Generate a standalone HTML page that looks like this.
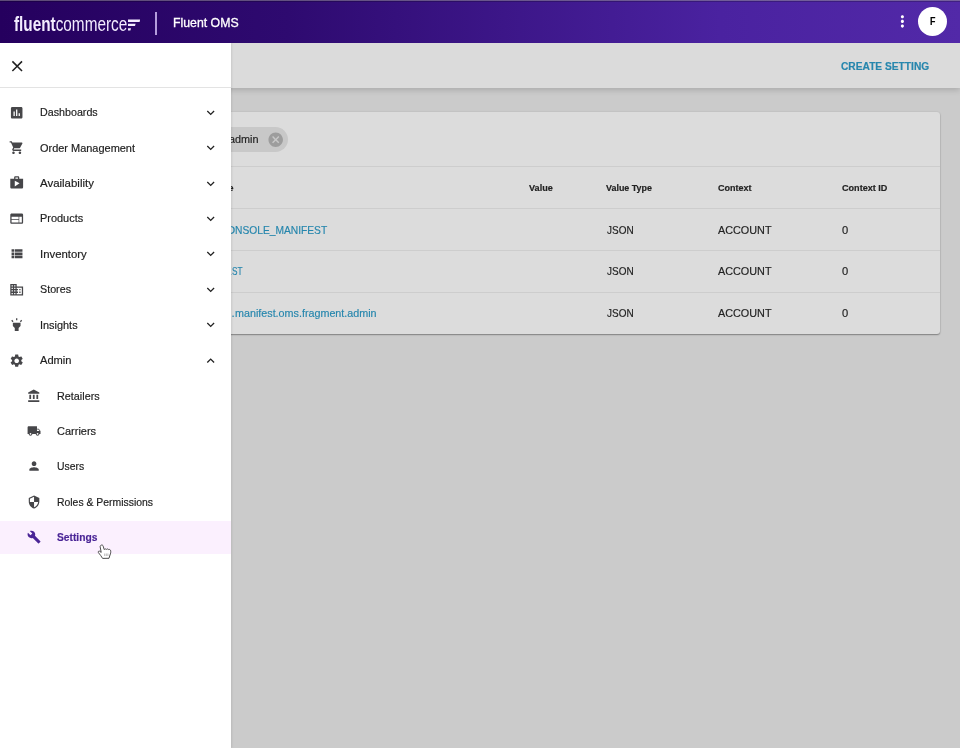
<!DOCTYPE html>
<html><head><meta charset="utf-8">
<style>
*{box-sizing:border-box;margin:0;padding:0}
html,body{width:960px;height:748px;overflow:hidden;background:#cbcbcb;font-family:"Liberation Sans",sans-serif;color:#212121}
svg{display:block}
.t{position:absolute;white-space:nowrap;font-size:11.5px;line-height:16px;color:#222;-webkit-text-stroke:.18px currentColor}
.fit{display:inline-block;white-space:nowrap;transform-origin:0 50%}
.b{font-weight:700}
.lk{color:#2686ad}
#hdr{position:absolute;left:0;top:0;width:960px;height:43px;background:linear-gradient(90deg,#25005e 0%,#2e0a70 30%,#4a22a0 75%,#5229a8 100%)}
#hdr .l1{position:absolute;left:0;top:0;width:960px;height:1px;background:rgba(151,152,145,.5)}
#hdr .l2{position:absolute;left:0;top:1px;width:960px;height:1px;background:rgba(0,0,0,.22)}
#hdr .t{color:#fff}
#logo{position:absolute;left:14px;top:11.5px;color:#f3ecff;white-space:nowrap;font-size:21px;line-height:24px}
#vdiv{position:absolute;left:155.3px;top:11.8px;width:1.5px;height:23.2px;background:rgba(215,195,250,.8)}
#avatar{position:absolute;left:918px;top:7.4px;width:29px;height:29px;border-radius:50%;background:#fff}
#tb{position:absolute;left:0;top:43px;width:960px;height:45px;background:#dbdbdb;box-shadow:0 2px 6px rgba(0,0,0,.17)}
#card{position:absolute;left:20px;top:112px;width:920px;height:222.3px;background:#dcdcdc;border-radius:3px;box-shadow:0 1px 1.5px rgba(0,0,0,.36),0 0 2px rgba(0,0,0,.12)}
.hr{position:absolute;left:20px;width:920px;height:1px;background:#cdcdcd}
#chip{position:absolute;left:150px;top:126.7px;width:138px;height:25px;border-radius:12.5px;background:#c8c8c8}
#side{position:absolute;left:0;top:43px;width:231px;height:705px;background:#fff;box-shadow:1px 0 2px rgba(0,0,0,.09)}
#side .sep{position:absolute;left:0;top:44px;width:231px;height:1px;background:#e3e3e3}
.row{position:absolute;left:0;width:231px;height:0}
.row .ic{position:absolute;left:8.65px;top:-7.7px;width:15.4px;height:15.4px;fill:#464649}
.row .lb{position:absolute;left:40.4px;top:-8.1px;font-size:11.5px;line-height:16px;color:#212121;white-space:nowrap;-webkit-text-stroke:.18px currentColor}
.row .ch{position:absolute;left:203.1px;top:-7.6px;width:15.4px;height:15.4px;fill:#212121}
.row.sub .ic{left:26.85px;top:-7.05px;width:14.1px;height:14.1px}
.row.sub .lb{left:57.4px}
.row .selbg{position:absolute;left:0;top:-16.25px;width:231px;height:32.5px;background:#fbf0fe}
.row.sel .lb{color:#4a2596;font-weight:700;left:57.4px}
.row.sel .ic{fill:#4a2596}
#root{position:absolute;left:0;top:0;width:960px;height:748px;overflow:hidden;will-change:transform}
</style></head><body><div id="root">
<div id="tb"></div>
<div id="card"></div>
<div id="chip"></div>
<svg viewBox="0 0 24 24" style="position:absolute;left:266.55px;top:130.5px;width:17.4px;height:17.4px;fill:#9d9d9d"><path d="M12 2C6.47 2 2 6.47 2 12s4.47 10 10 10 10-4.47 10-10S17.53 2 12 2zm5 13.59L15.59 17 12 13.41 8.41 17 7 15.59 10.59 12 7 8.41 8.41 7 12 10.59 15.59 7 17 8.41 13.41 12 17 15.590z"/></svg>
<div class="hr" style="top:166px"></div>
<div class="hr" style="top:208.2px"></div>
<div class="hr" style="top:250px"></div>
<div class="hr" style="top:292px"></div>
<span class="t b lk" style="left:841.1px;top:58.50px;font-size:10.2px;"><span class="fit" style="transform:scaleX(1.0010)">CREATE SETTING</span></span>
<span class="t " style="left:229.3px;top:131.00px;font-size:11.5px;"><span class="fit" style="transform:scaleX(0.9416)">admin</span></span>
<span class="t b" style="left:208.5px;top:179.50px;font-size:9.7px;"><span class="fit" style="transform:scaleX(0.9284)">Name</span></span>
<span class="t b" style="left:529.2px;top:179.50px;font-size:9.7px;"><span class="fit" style="transform:scaleX(0.9402)">Value</span></span>
<span class="t b" style="left:606.3px;top:179.50px;font-size:9.7px;"><span class="fit" style="transform:scaleX(0.9197)">Value Type</span></span>
<span class="t b" style="left:717.7px;top:179.50px;font-size:9.7px;"><span class="fit" style="transform:scaleX(0.9289)">Context</span></span>
<span class="t b" style="left:841.7px;top:179.50px;font-size:9.7px;"><span class="fit" style="transform:scaleX(0.9373)">Context ID</span></span>
<span class="t lk" style="right:724.7px;top:222.00px;font-size:11.5px">FC_MYSTIQUE_CO</span>
<span class="t lk" style="left:235.3px;top:222.00px;font-size:11.5px;"><span class="fit" style="transform:scaleX(0.8906)">NSOLE_MANIFEST</span></span>
<span class="t " style="left:606.7px;top:222.00px;font-size:11.5px;"><span class="fit" style="transform:scaleX(0.8672)">JSON</span></span>
<span class="t " style="left:717.7px;top:222.00px;font-size:11.5px;"><span class="fit" style="transform:scaleX(0.9407)">ACCOUNT</span></span>
<span class="t " style="left:841.7px;top:222.00px;font-size:11.5px;"><span class="fit" style="transform:scaleX(0.9678)">0</span></span>
<span class="t lk" style="right:728.3px;top:263.00px;font-size:11.5px">FC_MYSTIQUE_MANIFE</span>
<span class="t lk" style="left:231.7px;top:263.00px;font-size:11.5px;"><span class="fit" style="transform:scaleX(0.7141)">ST</span></span>
<span class="t " style="left:606.7px;top:263.00px;font-size:11.5px;"><span class="fit" style="transform:scaleX(0.8672)">JSON</span></span>
<span class="t " style="left:717.7px;top:263.00px;font-size:11.5px;"><span class="fit" style="transform:scaleX(0.9407)">ACCOUNT</span></span>
<span class="t " style="left:841.7px;top:263.00px;font-size:11.5px;"><span class="fit" style="transform:scaleX(0.9678)">0</span></span>
<span class="t lk" style="right:725.3px;top:305.00px;font-size:11.5px">fc.mystique.</span>
<span class="t lk" style="left:234.7px;top:305.00px;font-size:11.5px;"><span class="fit" style="transform:scaleX(0.9347)">manifest.oms.fragment.admin</span></span>
<span class="t " style="left:606.7px;top:305.00px;font-size:11.5px;"><span class="fit" style="transform:scaleX(0.8672)">JSON</span></span>
<span class="t " style="left:717.7px;top:305.00px;font-size:11.5px;"><span class="fit" style="transform:scaleX(0.9407)">ACCOUNT</span></span>
<span class="t " style="left:841.7px;top:305.00px;font-size:11.5px;"><span class="fit" style="transform:scaleX(0.9678)">0</span></span>
<div id="side">
 <svg viewBox="0 0 24 24" style="position:absolute;left:7.5px;top:13.7px;width:18.4px;height:18.4px;fill:#212121"><path d="M19 6.41L17.59 5 12 10.59 6.41 5 5 6.41 10.59 12 5 17.59 6.41 19 12 13.41 17.59 19 19 17.59 13.41 12z"/></svg>
 <div class="sep"></div>
<div class="row" style="top:69.30px"><svg class="ic" viewBox="0 0 24 24"><path d="M19 3H5c-1.1 0-2 .9-2 2v14c0 1.1.9 2 2 2h14c1.1 0 2-.9 2-2V5c0-1.1-.9-2-2-2zM9 17H7v-7h2v7zm4 0h-2V7h2v10zm4 0h-2v-4h2v4z"/></svg><span class="lb" style="top:-8.30px"><span class="fit" style="transform:scaleX(0.9304)">Dashboards</span></span><svg class="ch" viewBox="0 0 24 24"><path d="M16.59 8.59L12 13.17 7.41 8.59 6 10l6 6 6-6z"/></svg></div>
<div class="row" style="top:104.72px"><svg class="ic" viewBox="0 0 24 24"><path d="M7 18c-1.1 0-1.99.9-1.99 2S5.9 22 7 22s2-.9 2-2-.9-2-2-2zM1 2v2h2l3.6 7.59-1.35 2.45c-.16.28-.25.61-.25.96 0 1.1.9 2 2 2h12v-2H7.42c-.14 0-.25-.11-.25-.25l.03-.12.9-1.63h7.45c.75 0 1.41-.41 1.75-1.03l3.58-6.49c.08-.14.12-.31.12-.48 0-.55-.45-1-1-1H5.21l-.94-2H1zm16 16c-1.1 0-1.99.9-1.99 2s.89 2 1.99 2 2-.9 2-2-.9-2-2-2z"/></svg><span class="lb" style="top:-7.72px"><span class="fit" style="transform:scaleX(0.9527)">Order Management</span></span><svg class="ch" viewBox="0 0 24 24"><path d="M16.59 8.59L12 13.17 7.41 8.59 6 10l6 6 6-6z"/></svg></div>
<div class="row" style="top:140.14px"><svg class="ic" viewBox="0 0 24 24"><path d="M16 6V4c0-1.11-.89-2-2-2h-4c-1.11 0-2 .89-2 2v2H2v13c0 1.11.89 2 2 2h16c1.11 0 2-.89 2-2V6h-6zm-6-2h4v2h-4V4zM9 18V9l7.5 4L9 18z"/></svg><span class="lb" style="top:-8.14px"><span class="fit" style="transform:scaleX(0.9958)">Availability</span></span><svg class="ch" viewBox="0 0 24 24"><path d="M16.59 8.59L12 13.17 7.41 8.59 6 10l6 6 6-6z"/></svg></div>
<div class="row" style="top:175.56px"><svg class="ic" viewBox="0 0 24 24"><path d="M20 4H4c-1.1 0-1.99.9-1.99 2L2 18c0 1.1.9 2 2 2h16c1.1 0 2-.9 2-2V6c0-1.1-.9-2-2-2zm-5 14H4v-4h11v4zm0-5H4V9h11v4zm5 5h-4V9h4v9z"/></svg><span class="lb" style="top:-8.56px"><span class="fit" style="transform:scaleX(0.9517)">Products</span></span><svg class="ch" viewBox="0 0 24 24"><path d="M16.59 8.59L12 13.17 7.41 8.59 6 10l6 6 6-6z"/></svg></div>
<div class="row" style="top:210.98px"><svg class="ic" viewBox="0 0 24 24"><path d="M4 14h4v-4H4v4zm0 5h4v-4H4v4zM4 9h4V5H4v4zm5 5h12v-4H9v4zm0 5h12v-4H9v4zM9 5v4h12V5H9z"/></svg><span class="lb" style="top:-7.98px"><span class="fit" style="transform:scaleX(0.9871)">Inventory</span></span><svg class="ch" viewBox="0 0 24 24"><path d="M16.59 8.59L12 13.17 7.41 8.59 6 10l6 6 6-6z"/></svg></div>
<div class="row" style="top:246.40px"><svg class="ic" viewBox="0 0 24 24"><path d="M12 7V3H2v18h20V7H12zM6 19H4v-2h2v2zm0-4H4v-2h2v2zm0-4H4V9h2v2zm0-4H4V5h2v2zm4 12H8v-2h2v2zm0-4H8v-2h2v2zm0-4H8V9h2v2zm0-4H8V5h2v2zm10 12h-8v-2h2v-2h-2v-2h2v-2h-2V9h8v10zm-2-8h-2v2h2v-2zm0 4h-2v2h2v-2z"/></svg><span class="lb" style="top:-8.40px"><span class="fit" style="transform:scaleX(0.9323)">Stores</span></span><svg class="ch" viewBox="0 0 24 24"><path d="M16.59 8.59L12 13.17 7.41 8.59 6 10l6 6 6-6z"/></svg></div>
<div class="row" style="top:281.82px"><svg class="ic" viewBox="0 0 24 24"><path d="M6 14l3 3v5h6v-5l3-3V9H6v5zm5-12h2v3h-2V2zM3.5 5.88l1.41-1.41 2.12 2.12L5.62 8 3.5 5.88zm13.46.71l2.12-2.12 1.41 1.41L18.38 8l-1.42-1.41z"/></svg><span class="lb" style="top:-7.82px"><span class="fit" style="transform:scaleX(0.9485)">Insights</span></span><svg class="ch" viewBox="0 0 24 24"><path d="M16.59 8.59L12 13.17 7.41 8.59 6 10l6 6 6-6z"/></svg></div>
<div class="row" style="top:317.24px"><svg class="ic" viewBox="0 0 24 24"><path d="M19.14 12.94c.04-.3.06-.61.06-.94 0-.32-.02-.64-.07-.94l2.03-1.58c.18-.14.23-.41.12-.61l-1.92-3.32c-.12-.22-.37-.29-.59-.22l-2.39.96c-.5-.38-1.03-.7-1.62-.94l-.36-2.54c-.04-.24-.24-.41-.48-.41h-3.84c-.24 0-.43.17-.47.41l-.36 2.54c-.59.24-1.13.57-1.62.94l-2.39-.96c-.22-.08-.47 0-.59.22L2.74 8.87c-.12.21-.08.47.12.61l2.03 1.58c-.05.3-.09.63-.09.94s.02.64.07.94l-2.03 1.58c-.18.14-.23.41-.12.61l1.92 3.32c.12.22.37.29.59.22l2.39-.96c.5.38 1.03.7 1.62.94l.36 2.54c.05.24.24.41.48.41h3.84c.24 0 .44-.17.47-.41l.36-2.54c.59-.24 1.13-.56 1.62-.94l2.39.96c.22.08.47 0 .59-.22l1.92-3.32c.12-.22.07-.47-.12-.61l-2.01-1.58zM12 15.6c-1.98 0-3.6-1.62-3.6-3.6s1.62-3.6 3.6-3.6 3.6 1.62 3.6 3.6-1.62 3.6-3.6 3.6z"/></svg><span class="lb" style="top:-8.24px"><span class="fit" style="transform:scaleX(0.9660)">Admin</span></span><svg class="ch" viewBox="0 0 24 24"><path d="M12 8l-6 6 1.41 1.41L12 10.83l4.59 4.58L18 14z"/></svg></div>
<div class="row sub" style="top:352.66px"><svg class="ic" viewBox="0 0 24 24"><path d="M4 10v7h3v-7H4zm6 0v7h3v-7h-3zM2 22h19v-3H2v3zm14-12v7h3v-7h-3zm-4.5-9L2 6v2h19V6l-9.5-5z"/></svg><span class="lb" style="top:-7.66px"><span class="fit" style="transform:scaleX(0.9407)">Retailers</span></span></div>
<div class="row sub" style="top:388.08px"><svg class="ic" viewBox="0 0 24 24"><path d="M20 8h-3V4H3c-1.1 0-2 .9-2 2v11h2c0 1.66 1.34 3 3 3s3-1.34 3-3h6c0 1.66 1.34 3 3 3s3-1.34 3-3h2v-5l-3-4zM6 18.5c-.83 0-1.5-.67-1.5-1.5s.67-1.5 1.5-1.5 1.5.67 1.5 1.5-.67 1.5-1.5 1.5zm13.5-9l1.96 2.5H17V9.5h2.5zm-1.5 9c-.83 0-1.5-.67-1.5-1.5s.67-1.5 1.5-1.5 1.5.67 1.5 1.5-.67 1.5-1.5 1.5z"/></svg><span class="lb" style="top:-8.08px"><span class="fit" style="transform:scaleX(0.9562)">Carriers</span></span></div>
<div class="row sub" style="top:423.50px"><svg class="ic" viewBox="0 0 24 24"><path d="M12 12c2.21 0 4-1.79 4-4s-1.79-4-4-4-4 1.79-4 4 1.79 4 4 4zm0 2c-2.67 0-8 1.34-8 4v2h16v-2c0-2.66-5.33-4-8-4z"/></svg><span class="lb" style="top:-8.50px"><span class="fit" style="transform:scaleX(0.9057)">Users</span></span></div>
<div class="row sub" style="top:458.92px"><svg class="ic" viewBox="0 0 24 24"><path d="M12 1L3 5v6c0 5.55 3.84 10.74 9 12 5.16-1.26 9-6.45 9-12V5l-9-4zm0 10.99h7c-.53 4.12-3.28 7.79-7 8.94V12H5V6.3l7-3.11v8.8z"/></svg><span class="lb" style="top:-7.92px"><span class="fit" style="transform:scaleX(0.9049)">Roles &amp; Permissions</span></span></div>
<div class="row sub sel" style="top:494.34px"><div class="selbg"></div><svg class="ic" viewBox="0 0 24 24"><path d="M22.7 19l-9.1-9.1c.9-2.3.4-5-1.5-6.9-2-2-5-2.4-7.4-1.3L9 6 6 9 1.6 4.700C.4 7.1.9 10.100 2.9 12.100c1.9 1.900 4.600 2.400 6.900 1.500l9.100 9.100c.4.4 1 .4 1.4 0l2.300-2.300c.5-.4.5-1.100.1-1.400z"/></svg><span class="lb" style="top:-8.34px"><span class="fit" style="transform:scaleX(0.8904)">Settings</span></span></div>
</div>
<div id="hdr"><div class="l1"></div><div class="l2"></div>
 <div id="vdiv"></div>
 <svg viewBox="0 0 140 43" style="position:absolute;left:0;top:0;width:140px;height:43px;fill:#f3ecff"><path d="M128 19.6h12.200l-.6 2.300h-11.600zM128 23.800h7.600l-.6 2.300h-7zM128 28.300h3l-.6 2.300h-2.400z"/></svg>
 <svg viewBox="0 0 24 24" style="position:absolute;left:893px;top:12.150px;width:18.800px;height:18.800px;fill:#fff"><path d="M12 8c1.100 0 2-.900 2-2s-.900-2-2-2-2 .900-2 2 .900 2 2 2zm0 2c-1.100 0-2 .900-2 2s.900 2 2 2 2-.900 2-2-.900-2-2-2zm0 6c-1.100 0-2 .900-2 2s.900 2 2 2 2-.900 2-2-.900-2-2-2z"/></svg>
 <div id="avatar"></div>
<div id="logo"><span class="fit" style="transform:scaleX(0.7294)"><b>fluent</b>commerce</span></div>
<span class="t " style="left:172.7px;top:14.50px;font-size:13px;-webkit-text-stroke:.3px #fff"><span class="fit" style="transform:scaleX(0.9458)">Fluent OMS</span></span>
<span class="t b" style="left:929.9px;top:13.00px;font-size:10.9px;color:#000"><span class="fit" style="transform:scaleX(0.8113)">F</span></span>
</div>
<svg viewBox="0 0 960 748" style="position:absolute;left:0;top:0;width:960px;height:748px;pointer-events:none"><path d="M101.2 545.2C102 544.6 103 545.2 103.2 546.2L104.200 549.600C104.800 548.800 105.800 548.800 106.400 549.400C107 548.700 108.200 548.800 108.600 549.600C109.400 549.200 110.400 549.600 110.600 550.600C111 552 110.600 553.500 110 555L109 558.300L102.600 558.400C101.500 556.500 100 554.500 98.400 552.600C97.800 551.800 98.600 550.800 99.600 551.200L101.200 552.400L100.200 547C100 546.200 100.400 545.500 101.200 545.200Z" fill="#fff" stroke="#3a3a3a" stroke-width="0.9" stroke-linejoin="round"/><path d="M104.700 553.500v2.500M106.300 553.500v2.500M107.900 553.500v2.500" stroke="#8a8a8a" stroke-width="0.6" fill="none"/></svg>
</div></body></html>
